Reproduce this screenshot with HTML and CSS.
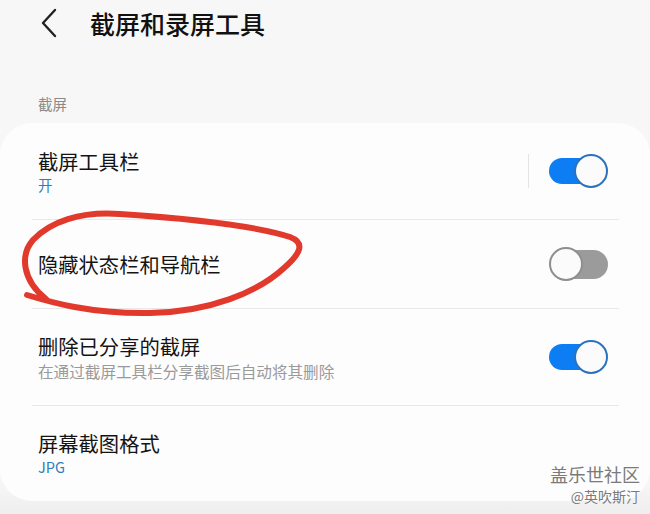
FILE: index.html
```html
<!DOCTYPE html>
<html lang="zh">
<head>
<meta charset="utf-8">
<link rel="stylesheet" href="styles.css">
</head>
<body>
<div class="page">
  <header class="header">
    <svg class="back" width="18" height="30" viewBox="0 0 18 30"><path d="M15 2 L3 15 L15 28" fill="none" stroke="#222" stroke-width="2.4" stroke-linecap="round" stroke-linejoin="round"/></svg>
    <h1 class="title">截屏和录屏工具</h1>
  </header>
  <div class="section-label">截屏</div>
  <div class="card">
    <div class="row row-tall">
      <div class="text">
        <div class="item-title">截屏工具栏</div>
        <div class="item-sub blue">开</div>
      </div>
      <div class="vdivider"></div>
      <div class="switch on"><div class="track"></div><div class="knob"></div></div>
    </div>
    <div class="row row-short">
      <div class="text">
        <div class="item-title">隐藏状态栏和导航栏</div>
      </div>
      <div class="switch off"><div class="track"></div><div class="knob"></div></div>
    </div>
    <div class="row row-tall">
      <div class="text">
        <div class="item-title">删除已分享的截屏</div>
        <div class="item-sub gray">在通过截屏工具栏分享截图后自动将其删除</div>
      </div>
      <div class="switch on"><div class="track"></div><div class="knob"></div></div>
    </div>
    <div class="row row-last">
      <div class="text">
        <div class="item-title">屏幕截图格式</div>
        <div class="item-sub blue">JPG</div>
      </div>
    </div>
  </div>
  <svg class="scribble" width="320" height="120" viewBox="0 200 320 120">
    <path d="M27 295 C50 302 90 314 150 313 C210 312 258 292 284 268 C300 254 306 243 290 237 C250 224 180 218 120 214 C80 211 50 222 33 240 C20 255 22 280 46 299" fill="none" stroke="#e2392d" stroke-width="6" stroke-linecap="round" stroke-linejoin="round"/>
  </svg>
  <div class="watermark">
    <div class="wm-1">盖乐世社区</div>
    <div class="wm-2">@英吹斯汀</div>
  </div>
</div>
</body>
</html>
```
FILE: styles.css
```css
* { box-sizing: border-box; margin: 0; padding: 0; }
html, body { width: 650px; height: 514px; overflow: hidden; }
body {
  background: #f0f0f0;
  font-family: "Noto Sans CJK SC", "Noto Sans", sans-serif;
  color: #111;
}
.page {
  position: relative;
  width: 650px;
  height: 514px;
  background: linear-gradient(#f7f7f7 0, #f7f7f7 480px, #eeeeee 514px);
}
.header {
  display: flex;
  align-items: center;
  height: 46px;
  padding-left: 40px;
}
.back { flex: none; }
.title {
  margin-left: 32px;
  font-size: 25px;
  font-weight: 500;
  color: #111;
  line-height: 46px;
}
.section-label {
  margin-top: 48px;
  padding-left: 38px;
  font-size: 14.5px;
  line-height: 20px;
  color: #8a8a8a;
  height: 29px;
}
.card {
  background: #fdfdfd;
  border-radius: 32px;
  height: 378px;
  padding: 0 31px 0 32px;
  display: flex;
  flex-direction: column;
}
.row {
  display: flex;
  align-items: center;
  padding: 0 11px 0 6px;
  border-bottom: 1px solid #e8e8e8;
}
.row-tall { height: 97px; }
.row-short { height: 89px; }
.row-last { height: 94px; border-bottom: none; }
.text { flex: 1; }
.item-title {
  font-size: 20.3px;
  line-height: 28px;
  color: #141414;
}
.item-sub {
  font-size: 14.5px;
  line-height: 20px;
}
.item-sub.gray { color: #9a9a9a; font-size: 15.6px; line-height: 22px; }
.blue { color: #2f7dbf; }
.vdivider {
  width: 1px;
  height: 34px;
  background: #e4e4e4;
  margin-right: 20px;
}
.switch {
  position: relative;
  width: 59px;
  height: 34px;
  flex: none;
}
.switch .track {
  position: absolute;
  top: 4px;
  height: 26px;
  border-radius: 13px;
}
.switch .knob {
  position: absolute;
  top: 0;
  width: 34px;
  height: 34px;
  border-radius: 50%;
  background: #fbfbfb;
}
.switch.on .track { left: 0; right: 4px; background: #0c7df2; }
.switch.on .knob { right: 0; border: 2px solid #2a72c0; }
.switch.off .track { left: 12px; right: 0; top: 3px; height: 29px; border-radius: 15px; background: #9b9b9b; }
.switch.off .knob { left: 0; border: 2px solid #8e8e8e; }
.scribble {
  position: absolute;
  left: 0;
  top: 200px;
  pointer-events: none;
}
.watermark {
  position: absolute;
  right: 10px;
  top: 463px;
  text-align: right;
  color: #7a7a7a;
  text-shadow: 0 0 2px #fff;
}
.wm-1 { font-size: 18px; line-height: 22px; }
.wm-2 { font-size: 14px; line-height: 18px; margin-top: 2px; }
```
